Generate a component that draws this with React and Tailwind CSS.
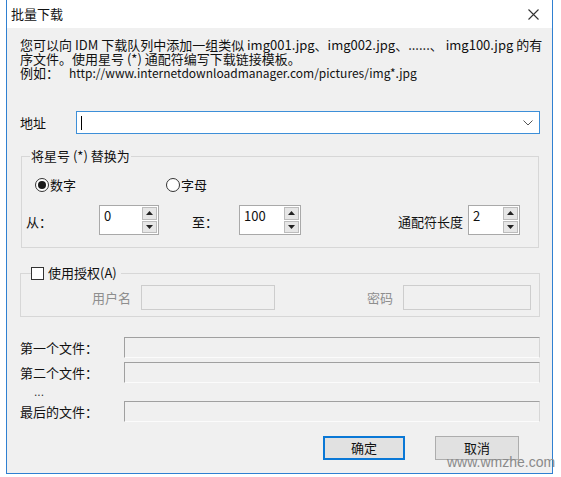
import React from "react";

function SpinButton({ up }) {
  return (
    <div className="flex flex-1 items-center justify-center border border-[#bcbcbc] bg-[#e6e6e6]">
      <svg width="7" height="4" viewBox="0 0 7 4">
        {up ? <polygon points="0,4 7,4 3.5,0" fill="#222" /> : <polygon points="0,0 7,0 3.5,4" fill="#222" />}
      </svg>
    </div>
  );
}

function Spin({ value, className }) {
  return (
    <div className={`flex h-[30px] border border-[#a9a9a9] bg-white ${className}`}>
      <div className="flex-1 pl-[4px] pt-[2px] text-[13px] leading-[16px]">{value}</div>
      <div className="flex w-[17px] flex-col gap-px p-px">
        <SpinButton up />
        <SpinButton />
      </div>
    </div>
  );
}

function Radio({ checked, label }) {
  return (
    <div className="flex items-center">
      <div className="flex h-[14px] w-[14px] items-center justify-center rounded-full border border-[#333] bg-white">
        {checked && <div className="h-[8px] w-[8px] rounded-full bg-[#1a1a1a]" />}
      </div>
      <span className="ml-[1px]">{label}</span>
    </div>
  );
}

function FileRow({ label }) {
  return (
    <div className="flex h-[21px] items-center">
      <div className="w-[104px]">{label}</div>
      <div className="h-full flex-1 border border-t-[#a0a0a0] border-l-[#a0a0a0] border-r-[#d6d6d6] border-b-[#fbfbfb] bg-[#f0f0f0]" />
    </div>
  );
}

export default function App() {
  return (
    <div className="relative h-[477px] w-[561px] overflow-hidden bg-white font-['Noto_Sans_CJK_SC',sans-serif] text-[13px] leading-[16px] text-[#111]">
      <div className="ml-[6px] flex h-[474px] w-[547px] flex-col border-x border-b border-[#2f80d1]">
        {/* title bar */}
        <div className="flex h-[28px] items-center justify-between bg-white pl-[4px] pr-[13px]">
          <span className="text-[13px]">批量下载</span>
          <svg width="11" height="11" viewBox="0 0 11 11">
            <path d="M0.5 0.5 L10.5 10.5 M10.5 0.5 L0.5 10.5" stroke="#333" strokeWidth="1.1" />
          </svg>
        </div>

        {/* dialog body */}
        <div className="flex flex-1 flex-col bg-[#f0f0f0] pl-[13px] pr-[12px]">
          <div className="mt-[10px] whitespace-pre text-[13px] leading-[14px]">
            <div>您可以向 IDM 下载队列中添加一组类似 img001.jpg、img002.jpg、......、 img100.jpg 的有</div>
            <div>序文件。使用星号 (*) 通配符编写下载链接模板。</div>
            <div className="flex items-baseline">
              <span>例如：</span>
              <span className="ml-[10px] text-[12px]">http://www.internetdownloadmanager.com/pictures/img*.jpg</span>
            </div>
          </div>

          <div className="mt-[31px] flex h-[23px] items-center">
            <div className="w-[56px]">地址</div>
            <div className="flex h-full flex-1 items-center justify-between border border-[#3d8fd8] bg-white pl-[4px] pr-[6px]">
              <div className="h-[14px] w-px bg-black" />
              <svg width="10" height="6" viewBox="0 0 10 6">
                <path d="M0.5 0.5 L5 5 L9.5 0.5" stroke="#555" strokeWidth="1" fill="none" />
              </svg>
            </div>
          </div>

          <fieldset className="mx-[1px] mt-[14px] border border-[#d7d7d7] pb-[12px]">
            <legend className="ml-[8px] px-px leading-[16px]">将星号 (*) 替换为</legend>
            <div className="mt-[13px] flex h-[16px] items-center pl-[13px]">
              <div className="w-[131px]">
                <Radio checked label="数字" />
              </div>
              <Radio label="字母" />
            </div>
            <div className="mt-[12px] flex h-[30px] items-center pl-[4px] pr-[18px]">
              <div className="w-[73px] pt-[3px]">从：</div>
              <Spin value="0" className="w-[60px]" />
              <div className="ml-[33px] w-[47px] pt-[3px]">至：</div>
              <Spin value="100" className="w-[62px]" />
              <div className="flex-1" />
              <div className="mr-[5px] pt-[3px]">通配符长度</div>
              <Spin value="2" className="w-[52px]" />
            </div>
          </fieldset>

          <fieldset className="mt-[17px] border border-[#d7d7d7] pb-[6px]">
            <legend className="ml-[10px] flex items-center leading-[16px]">
              <span className="h-[13px] w-[13px] border border-[#333] bg-white" />
              <span className="ml-[4px] pr-[4px]">使用授权(A)</span>
            </legend>
            <div className="mt-[4px] flex h-[25px] items-center pl-[71px] text-[#8e8e8e]">
              <div className="w-[49px]">用户名</div>
              <div className="h-full w-[134px] border border-[#cdcdcd] bg-[#f0f0f0]" />
              <div className="ml-[92px] w-[36px]">密码</div>
              <div className="h-full w-[128px] border border-[#cdcdcd] bg-[#f0f0f0]" />
            </div>
          </fieldset>

          <div className="mt-[20px] flex flex-col">
            <FileRow label="第一个文件：" />
            <div className="mt-[4px]">
              <FileRow label="第二个文件：" />
            </div>
            <div className="flex h-[18px] items-center pl-[14px] font-['Liberation_Sans',sans-serif] text-[12px] leading-[10px] text-[#333]">...</div>
            <FileRow label="最后的文件：" />
          </div>

          <div className="mt-[14px] flex justify-end gap-[30px] pr-[21px]">
            <button className="flex h-[24px] w-[82px] items-center justify-center border-2 border-[#0a78d6] bg-[#e1e1e1]">确定</button>
            <button className="flex h-[24px] w-[84px] items-center justify-center border border-[#adadad] bg-[#e1e1e1]">取消</button>
          </div>
        </div>
      </div>

      <div className="absolute left-[447px] top-[454px] font-['Liberation_Sans',sans-serif] text-[14px] leading-[16px] text-[#8a8a8a]">
        www.wmzhe.com
      </div>
    </div>
  );
}
